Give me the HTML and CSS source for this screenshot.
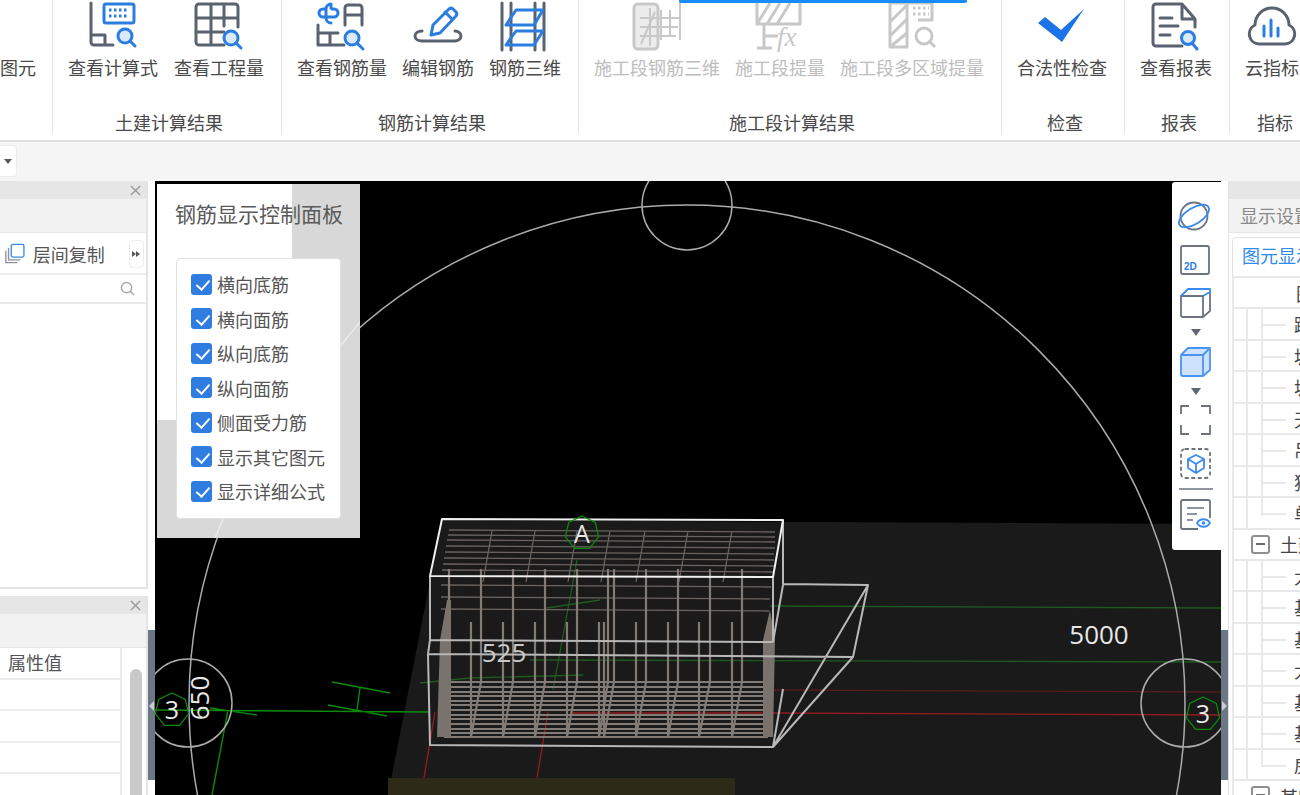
FILE: index.html
```html
<!DOCTYPE html>
<html lang="zh-CN">
<head>
<meta charset="utf-8">
<title>钢筋显示控制面板</title>
<link rel="stylesheet" href="styles.css">
</head>
<body>
<div class="app">
  <div class="top-progress"></div>
  <header class="ribbon">
    <section class="group group-first">
      <div class="tools"><div class="tool tool-end"><span class="tool-label">图元</span></div></div>
    </section>
    <section class="group">
      <div class="tools tools-wide">
        <div class="tool">
          <svg class="ico" viewBox="88 0 50 52"><path class="g" d="M91 3v39a3 3 0 0 0 3 3h19M91 35h14v10"/><rect class="b" x="104" y="4" width="30" height="19" rx="2"/><path class="dots" d="M109 10h20M109 16h20"/><circle class="m" cx="125" cy="36" r="7"/><path class="b" d="M130 41l5 5"/></svg>
          <span class="tool-label">查看计算式</span>
        </div>
        <div class="tool">
          <svg class="ico" viewBox="194 0 50 52"><path class="g" d="M224 45h-25a3 3 0 0 1-3-3V7a3 3 0 0 1 3-3h36a3 3 0 0 1 3 3v20M196 18h42M196 32h28M211 4v41M224 4v22"/><circle class="m" cx="231" cy="38" r="7"/><path class="b" d="M236 43l5 5"/></svg>
          <span class="tool-label">查看工程量</span>
        </div>
      </div>
      <h2 class="group-title">土建计算结果</h2>
    </section>
    <section class="group">
      <div class="tools">
        <div class="tool">
          <svg class="ico" viewBox="317 0 50 52"><path class="b" d="M331 4a5 5 0 0 0-5 5v9a5 5 0 0 0 5 5M326 9h-3a4 4 0 0 0 0 8h11a4 4 0 0 0 0-8h-2M331 4v4"/><path class="g" d="M345 25V8a3 3 0 0 1 3-3h11a3 3 0 0 1 3 3v17M345 15h17M318 25v20h26M318 33h20M330 33v12"/><circle class="m" cx="352" cy="38" r="7"/><path class="b" d="M357 43l6 6"/></svg>
          <span class="tool-label">查看钢筋量</span>
        </div>
        <div class="tool">
          <svg class="ico" viewBox="413 0 50 52"><path class="g" d="M422 31c-4 0-7 2-7 5s3 5 7 5h33c3 0 6-2 6-5s-3-5-6-5"/><path class="b" d="M431 35l2-10 16-16a3 3 0 0 1 4 0l3 3a3 3 0 0 1 0 4L440 33zM445 12l7 7"/></svg>
          <span class="tool-label">编辑钢筋</span>
        </div>
        <div class="tool">
          <svg class="ico" viewBox="500 0 50 52"><path class="g" d="M502 3v47M511 3v47M535 3v47M544 3v47"/><path class="b" d="M516 10h27l-9 15h-28zM516 31h27l-9 14h-28z"/></svg>
          <span class="tool-label">钢筋三维</span>
        </div>
      </div>
      <h2 class="group-title">钢筋计算结果</h2>
    </section>
    <section class="group">
      <div class="tools">
        <div class="tool tool-off">
          <svg class="ico" viewBox="632 0 50 52"><rect class="d d-soft" x="634" y="4" width="24" height="45" rx="4"/><path class="d-thin" d="M640 18h40M640 27h38M640 36h36M650 8v38M661 10v30M670 10v26M680 2v38M641 44l14-32"/></svg>
          <span class="tool-label">施工段钢筋三维</span>
        </div>
        <div class="tool tool-off">
          <svg class="ico" viewBox="755 0 50 52"><path class="d" d="M757 3v21h43V3M757 24l13-21M767 24l13-21M777 24l13-21M764 24v24M757 48h15M764 36h14"/><text class="fx" x="777" y="46">fx</text></svg>
          <span class="tool-label">施工段提量</span>
        </div>
        <div class="tool tool-off">
          <svg class="ico" viewBox="887 0 50 52"><path class="d" d="M890 3h17v44h-17zM890 22l17-17M890 36l17-17M890 47l17-14M907 3h25v17h-14"/><path class="d-dots" d="M913 8h16M913 14h16"/><circle class="d" cx="924" cy="36" r="8"/><path class="d" d="M930 42l5 5"/></svg>
          <span class="tool-label">施工段多区域提量</span>
        </div>
      </div>
      <h2 class="group-title">施工段计算结果</h2>
    </section>
    <section class="group">
      <div class="tools">
        <div class="tool">
          <svg class="ico" viewBox="1037 0 50 52"><polygon class="check" points="1038,23 1045,17 1061,30 1084,9 1062,42"/></svg>
          <span class="tool-label">合法性检查</span>
        </div>
      </div>
      <h2 class="group-title">检查</h2>
    </section>
    <section class="group">
      <div class="tools">
        <div class="tool">
          <svg class="ico" viewBox="1151 0 50 52"><path class="g" d="M1182 46h-26a3 3 0 0 1-3-3V7a3 3 0 0 1 3-3h26l13 15v8M1182 4v15h13M1160 18h12M1160 26h18M1160 35h10"/><circle class="m" cx="1188" cy="38" r="6.5"/><path class="b" d="M1192 43l5 6"/></svg>
          <span class="tool-label">查看报表</span>
        </div>
      </div>
      <h2 class="group-title">报表</h2>
    </section>
    <section class="group group-last">
      <div class="tools">
        <div class="tool">
          <svg class="ico" viewBox="1247 0 50 52"><path class="g" d="M1259 44a10 10 0 0 1-4-19a17 17 0 0 1 34 0a10 10 0 0 1-4 19z"/><path class="b" d="M1264 26v10M1271 20v16M1278 28v8"/></svg>
          <span class="tool-label">云指标</span>
        </div>
      </div>
      <h2 class="group-title">指标</h2>
    </section>
  </header>

  <div class="strip">
    <button class="strip-btn" type="button"><span class="caret"></span></button>
  </div>

  <main class="main">
    <aside class="left">
      <section class="side-panel side-panel-top">
        <div class="side-head"><svg class="close" viewBox="0 0 12 12"><path d="M1 1l10 10M11 1L1 11"/></svg></div>
        <div class="side-sub"></div>
        <div class="copy-bar">
          <svg class="copy-ico" viewBox="0 0 24 24"><path class="copy-g" d="M2 9v13h13M5 6v13h13"/><rect class="copy-b" x="8" y="2" width="14" height="14" rx="2"/></svg>
          <span class="copy-text">层间复制</span>
          <span class="more"><i></i><i></i></span>
        </div>
        <div class="search">
          <svg class="search-ico" viewBox="0 0 16 16"><circle cx="7" cy="7" r="5.5"/><path d="M11 11l4 4"/></svg>
        </div>
        <div class="list"></div>
      </section>
      <section class="side-panel side-panel-bottom">
        <div class="side-head"><svg class="close" viewBox="0 0 12 12"><path d="M1 1l10 10M11 1L1 11"/></svg></div>
        <div class="side-sub"></div>
        <div class="props">
          <div class="props-table">
            <div class="props-row props-header">属性值</div>
            <div class="props-row"></div>
            <div class="props-row"></div>
            <div class="props-row"></div>
            <div class="props-row"></div>
          </div>
          <div class="props-scroll"><span class="thumb"></span></div>
        </div>
      </section>
    </aside>

    <div class="gutter"><span class="grip grip-left"></span></div>

    <div class="viewport">
      <svg class="scene" viewBox="155 181 1066 614" preserveAspectRatio="none">
        <polygon class="floor" points="442,520 1221,524 1221,795 388,795"/>
        <rect class="floor-patch" x="388" y="778" width="347" height="17"/>

        <g class="grid-g">
          <path d="M155 710L430 712M210 708L257 715M332 682L390 693M328 705L387 716M360 688L357 710M228 710L212 795"/>
        </g>
        <g class="grid-g-dim">
          <path d="M547 608L600 600M530 660L1221 662M770 606L1221 608M420 683L470 678L583 675M577 560L553 690"/>
        </g>
        <g class="grid-r">
          <path d="M773 713L1221 715M570 713L773 713M548 712L537 778M435 712L424 778"/>
        </g>
        <path class="grid-r-dim" d="M773 690L1221 692"/>

        <g class="ring">
          <circle cx="687" cy="703" r="498"/>
          <circle cx="687" cy="205" r="45"/>
          <circle cx="188" cy="703" r="44"/>
          <circle cx="1185" cy="703" r="44"/>
        </g>

        <path class="rebar" d="M449 530L775 532M448 535L775 537M447 540L775 542M446 546L775 548M445 552L774 554M444 558L774 560M443 564L774 566M442 570L773 572M441 585L771 587M441 597L770 599M441 609L769 611M492 531L483 582M535 531L526 582M577 531L568 582M610 531L601 582M645 531L636 582M688 531L679 582M732 531L723 582"/>
        <path class="rebar-v" d="M449 569V682L444 737M481 569V682L471 737M513 569V682L503 737M545 569V682L535 737M577 569V682L567 737M608 569V682L599 737M614 569V682L604 737M646 569V682L636 737M678 569V682L668 737M710 569V682L699 737M742 569V682L732 737M471 622V737M503 622V737M535 622V737M567 622V737M599 622V737M604 622V737M636 622V737M668 622V737M699 622V737M732 622V737"/>
        <path class="rebar-mat" d="M448 682H765M447 687H765M447 692H765M446 696H766M446 701H766M446 705H766M445 710H766M445 715H767M445 719H767M444 724H767M444 729H767M444 733H768M444 737H768"/>
        <polygon class="rebar-wall" points="447,600 451,600 451,737 437,737 440,640"/>
        <polygon class="rebar-wall" points="770,610 775,640 773,737 763,737 763,640"/>

        <path class="box" d="M430 640V576M773 577V642L783 585M430 640L772 642M428 654L853 657L868 585L783 584V520M428 654L430 640M428 654L430 745L773 747L853 657M773 747L868 585M773 747L783 689"/>
        <path class="box-top" d="M442 519L783 520L773 577L430 576Z"/>

        <g class="axis-hex">
          <polygon points="172,693 185.300,699.400 188.600,713.800 179.400,725.300 164.600,725.300 155.400,713.800 158.700,699.400"/>
          <polygon points="582,516 595.300,522.400 598.600,536.800 589.400,548.300 574.600,548.300 565.400,536.800 568.700,522.400"/>
          <polygon points="1203,697 1216.300,703.400 1219.600,717.800 1210.400,729.300 1195.600,729.300 1186.400,717.800 1189.700,703.400"/>
        </g>
        <text class="num num-axis" x="172" y="719">3</text>
        <text class="num num-axis" x="582" y="543">A</text>
        <text class="num num-axis" x="1203" y="723">3</text>
        <text class="num" transform="translate(209 698) rotate(-90)">650</text>
        <text class="num num-dim" x="504" y="662">525</text>
        <text class="num" x="1099" y="644">5000</text>
      </svg>

      <div class="control-panel">
        <svg class="panel-trace" viewBox="0 0 203 354"><path d="M184 161L203 138M66 335L58 354"/></svg>
        <h1 class="control-title">钢筋显示控制面板</h1>
        <div class="control-card">
          <label class="option"><input type="checkbox" checked><span>横向底筋</span></label>
          <label class="option"><input type="checkbox" checked><span>横向面筋</span></label>
          <label class="option"><input type="checkbox" checked><span>纵向底筋</span></label>
          <label class="option"><input type="checkbox" checked><span>纵向面筋</span></label>
          <label class="option"><input type="checkbox" checked><span>侧面受力筋</span></label>
          <label class="option"><input type="checkbox" checked><span>显示其它图元</span></label>
          <label class="option"><input type="checkbox" checked><span>显示详细公式</span></label>
        </div>
      </div>

      <div class="view-tools">
        <svg class="view-tools-svg" viewBox="1172 182 49 368">
          <circle class="vg" cx="1194" cy="216" r="13.5"/>
          <ellipse class="vb" cx="1194" cy="216" rx="17" ry="8" transform="rotate(-32 1194 216)"/>
          <rect class="vg" x="1181" y="246" width="28" height="28" rx="2"/>
          <text class="label-2d" x="1184" y="270">2D</text>
          <path class="vg" d="M1181 296h22v21h-20a2 2 0 0 1-2-2zM1203 296v21l7-6V291"/>
          <path class="vb" d="M1181 296l7-7h22v3l-7 4"/>
          <polygon class="tri" points="1191,329 1201,329 1196,336"/>
          <path class="vb-fill" d="M1181 355l7-7h22v22l-7 6h-20a2 2 0 0 1-2-2zM1181 355h22v21M1203 355l7-7"/>
          <polygon class="tri" points="1191,388 1201,388 1196,395"/>
          <path class="vg" d="M1181 414v-8h8M1201 406h9v8M1210 425v9h-9M1189 434h-8v-9"/>
          <rect class="vdash" x="1181" y="449" width="29" height="29" rx="4"/>
          <path class="vb" d="M1196 455l8 4v9l-8 5-8-5v-9zM1188 459l8 5 8-5M1196 464v9"/>
          <path class="vthin" d="M1179 489h34"/>
          <path class="vg" d="M1198 529h-15a2 2 0 0 1-2-2v-25a2 2 0 0 1 2-2h25a2 2 0 0 1 2 2v16"/>
          <path class="vthin" d="M1187 508h17M1187 514h10M1187 520h6"/>
          <path class="vb" d="M1197 523c3-5 10-5 13 0c-3 5-10 5-13 0z"/>
          <circle class="vb-dot" cx="1203.500" cy="523" r="1.800"/>
        </svg>
      </div>
    </div>

    <div class="gutter gutter-right"><span class="grip grip-right"></span></div>

    <aside class="right">
      <div class="side-head"></div>
      <div class="side-sub right-title">显示设置</div>
      <div class="tabs"><div class="tab">图元显示</div></div>
      <div class="tree">
        <div class="tree-row tree-root"><span class="tree-text">图元</span></div>
        <div class="tree-row"><i class="g1"></i><i class="g2"></i><span class="tree-text">踏步</span></div>
        <div class="tree-row"><i class="g1"></i><i class="g2"></i><span class="tree-text">坡道</span></div>
        <div class="tree-row"><i class="g1"></i><i class="g2"></i><span class="tree-text">坡道</span></div>
        <div class="tree-row"><i class="g1"></i><i class="g2"></i><span class="tree-text">天棚</span></div>
        <div class="tree-row"><i class="g1"></i><i class="g2"></i><span class="tree-text">吊顶</span></div>
        <div class="tree-row"><i class="g1"></i><i class="g2"></i><span class="tree-text">独立</span></div>
        <div class="tree-row tree-last"><i class="g1"></i><i class="g2"></i><span class="tree-text">单梁</span></div>
        <div class="tree-row tree-section"><span class="toggle"></span><span class="section-text">土建</span></div>
        <div class="tree-row"><i class="g1"></i><i class="g2"></i><span class="tree-text">大开挖</span></div>
        <div class="tree-row"><i class="g1"></i><i class="g2"></i><span class="tree-text">基坑</span></div>
        <div class="tree-row"><i class="g1"></i><i class="g2"></i><span class="tree-text">基槽</span></div>
        <div class="tree-row"><i class="g1"></i><i class="g2"></i><span class="tree-text">大开挖</span></div>
        <div class="tree-row"><i class="g1"></i><i class="g2"></i><span class="tree-text">基础</span></div>
        <div class="tree-row"><i class="g1"></i><i class="g2"></i><span class="tree-text">基础梁</span></div>
        <div class="tree-row tree-last"><i class="g1"></i><i class="g2"></i><span class="tree-text">房心</span></div>
        <div class="tree-row tree-section"><span class="toggle"></span><span class="section-text">其它</span></div>
      </div>
    </aside>
  </main>
</div>
</body>
</html>
```

FILE: styles.css
```css
* { box-sizing: border-box; }

html, body {
  margin: 0;
  height: 100%;
  overflow: hidden;
  background: #fff;
}

body {
  font-family: "Noto Sans CJK SC", "Liberation Sans", sans-serif;
  font-size: 18px;
  color: #4a4a4a;
}

.app {
  position: relative;
  width: 1300px;
  height: 795px;
  display: flex;
  flex-direction: column;
  overflow: hidden;
}

.top-progress {
  position: absolute;
  left: 679px;
  top: 0;
  width: 288px;
  height: 3px;
  background: #1a8cf5;
  border-radius: 0 0 2px 2px;
}

/* ribbon */
.ribbon {
  flex: none;
  height: 142px;
  display: flex;
  align-items: flex-start;
  background: #fff;
  border-bottom: 2px solid #dedede;
}

.group {
  height: 134px;
  flex: none;
  display: flex;
  flex-direction: column;
  justify-content: space-between;
  padding: 0 17px 0 15px;
  border-right: 1px solid #e4e4e4;
}

.group-first { width: 53px; padding: 0; }
.group-last { border-right: 0; padding-right: 0; }

.tools { display: flex; gap: 15px; }
.tools-wide { gap: 16px; }

.tool {
  display: flex;
  flex-direction: column;
  align-items: center;
}

.group-first .tools { justify-content: flex-end; padding: 55px 16px 0 0; }
.tool-off { color: #bdbdbd; }

.ico {
  display: block;
  width: 50px;
  height: 52px;
  overflow: visible;
  margin-bottom: 3px;
}

.tool-label {
  display: block;
  line-height: 24px;
  white-space: nowrap;
}

.group-title {
  margin: 0 0 1px;
  padding-left: 6px;
  font-size: 18px;
  font-weight: 400;
  line-height: 22px;
  text-align: center;
  white-space: nowrap;
}

.ico .g { fill: none; stroke: #5a6270; stroke-width: 3; stroke-linecap: round; stroke-linejoin: round; }
.ico .b { fill: none; stroke: #2a7de1; stroke-width: 3; stroke-linecap: round; stroke-linejoin: round; }
.ico .m { fill: #dbe9fd; stroke: #2a7de1; stroke-width: 3; }
.ico .dots { fill: none; stroke: #2a7de1; stroke-width: 3; stroke-dasharray: 2.500 2.500; }
.ico .d { fill: none; stroke: #c8c8c8; stroke-width: 3; stroke-linejoin: round; }
.ico .d-soft { fill: #ececec; }
.ico .d-thin { fill: none; stroke: #c8c8c8; stroke-width: 2; }
.ico .d-dots { fill: none; stroke: #c8c8c8; stroke-width: 3; stroke-dasharray: 2.500 2.500; }
.ico .fx { fill: #c8c8c8; font-family: "Liberation Serif", serif; font-style: italic; font-size: 27px; }
.ico .check { fill: #1a73e8; }

/* strip */
.strip {
  flex: none;
  height: 39px;
  background: #f5f5f5;
  padding-top: 3px;
}

.strip-btn {
  display: flex;
  align-items: center;
  justify-content: center;
  width: 17px;
  height: 32px;
  padding: 0;
  background: #fff;
  border: 1px solid #ececec;
  border-left: 0;
  border-radius: 0 4px 4px 0;
}

.caret {
  width: 0;
  height: 0;
  border-left: 4px solid transparent;
  border-right: 4px solid transparent;
  border-top: 5px solid #5a5a5a;
}

/* main */
.main {
  flex: 1;
  min-height: 0;
  display: flex;
}

.left {
  flex: none;
  width: 148px;
  display: flex;
  flex-direction: column;
  gap: 7px;
  background: #fff;
}

.side-panel {
  display: flex;
  flex-direction: column;
  border-right: 2px solid #e4e4e4;
  min-height: 0;
}

.side-panel-top { height: 408px; border-bottom: 2px solid #e4e4e4; }
.side-panel-bottom { flex: 1; }

.side-head {
  flex: none;
  height: 18px;
  display: flex;
  align-items: center;
  justify-content: flex-end;
  padding-right: 5px;
  background: #e6e6e6;
}

.close { width: 11px; height: 11px; }
.close path { fill: none; stroke: #9a9a9a; stroke-width: 1.500; }

.side-sub {
  flex: none;
  height: 34px;
  background: #f2f2f2;
  border-bottom: 1px solid #e6e6e6;
}

.copy-bar {
  flex: none;
  height: 42px;
  display: flex;
  align-items: center;
  padding: 1px 2px 0 4px;
  border-bottom: 2px solid #ececec;
}

.copy-ico { width: 23px; height: 23px; margin-right: 7px; }
.copy-g { fill: none; stroke: #8c939c; stroke-width: 1.500; }
.copy-b { fill: #fff; stroke: #3a8bf0; stroke-width: 1.500; }
.copy-text { white-space: nowrap; color: #555; margin-right: 2px; }

.more {
  margin-left: 22px;
  width: 16px;
  height: 28px;
  display: flex;
  align-items: center;
  justify-content: center;
  border: 1px solid #ececec;
  border-radius: 4px;
}

.more i {
  width: 0;
  height: 0;
  border-top: 3px solid transparent;
  border-bottom: 3px solid transparent;
  border-left: 4px solid #555;
}

.search {
  flex: none;
  height: 29px;
  display: flex;
  align-items: center;
  justify-content: flex-end;
  padding-right: 11px;
  border-bottom: 2px solid #e8e8e8;
}

.search-ico { width: 15px; height: 15px; }
.search-ico circle, .search-ico path { fill: none; stroke: #aaa; stroke-width: 1.600; }

.list { flex: 1; }

.props {
  flex: 1;
  display: flex;
  min-height: 0;
}

.props-table {
  width: 122px;
  flex: none;
  border-right: 2px solid #ececec;
}

.props-row {
  height: 31.500px;
  border-bottom: 2px solid #ececec;
}

.props-header {
  padding-left: 8px;
  line-height: 28px;
  color: #555;
}

.props-scroll {
  flex: 1;
  padding: 21px 5px 0 8px;
}

.thumb {
  display: block;
  width: 12px;
  height: 160px;
  background: #c9c9c9;
  border-radius: 6px;
}

/* gutters */
.gutter {
  flex: none;
  width: 7px;
  position: relative;
  background: #fff;
}

.gutter::before {
  content: "";
  position: absolute;
  left: 0;
  top: 449px;
  width: 7px;
  height: 150px;
  background: #6b7785;
}

.gutter-right { width: 7px; }

.grip {
  position: absolute;
  top: 520px;
  width: 0;
  height: 0;
  border-top: 5px solid transparent;
  border-bottom: 5px solid transparent;
}

.grip-left { left: 1px; border-right: 5px solid #c9ced4; }
.grip-right { left: 1px; border-left: 5px solid #c9ced4; }

/* viewport */
.viewport {
  position: relative;
  flex: none;
  width: 1066px;
  background: #000;
  overflow: hidden;
}

.scene {
  position: absolute;
  inset: 0;
  width: 100%;
  height: 100%;
  display: block;
}

.floor { fill: #1a1a1a; }
.floor-patch { fill: #2e2a18; }

.grid-g path { fill: none; stroke: #0b8a0b; stroke-width: 1.400; }
.grid-g-dim path { fill: none; stroke: #1f5a1f; stroke-width: 1.300; }
.grid-r path { fill: none; stroke: #8f1c1c; stroke-width: 1.400; }
.grid-r-dim { fill: none; stroke: #541c1c; stroke-width: 1.400; }

.ring circle { fill: none; stroke: #ababab; stroke-width: 1.500; }

.rebar { fill: none; stroke: #6a6360; stroke-width: 1.300; }
.rebar-v { fill: none; stroke: #827a75; stroke-width: 2.200; }
.rebar-mat { fill: none; stroke: #837b76; stroke-width: 2; }
.rebar-wall { fill: #7a726d; }

.box { fill: none; stroke: #b8b8b8; stroke-width: 2; stroke-linejoin: round; }
.box-top { fill: none; stroke: #efefef; stroke-width: 2; stroke-linejoin: round; }

.axis-hex polygon { fill: none; stroke: #0b8a0b; stroke-width: 1.300; }

.num {
  fill: #e8e8e8;
  font-family: "Open Sans", "Liberation Sans", sans-serif;
  font-size: 26px;
  text-anchor: middle;
}

.num-axis { font-size: 25px; }
.num-dim { fill: #c9c9c9; }

/* control panel */
.control-panel {
  position: absolute;
  left: 2px;
  top: 3px;
  width: 203px;
  height: 354px;
  padding: 15px 0 0 19px;
  background: linear-gradient(#fff, #fff) 0 0 / 135px 236px no-repeat, #d8d8d8;
}

.panel-trace {
  position: absolute;
  inset: 0;
  width: 100%;
  height: 100%;
}

.panel-trace path { fill: none; stroke: #ececec; stroke-width: 1.300; }

.control-title {
  position: relative;
  margin: 0 0 31px -1px;
  font-size: 21px;
  font-weight: 400;
  line-height: 28px;
  white-space: nowrap;
  color: #5a5a5a;
}

.control-card {
  position: relative;
  width: 165px;
  height: 261px;
  padding: 8px 0 0 14px;
  background: #fff;
  border: 1px solid #e2e2e2;
  border-radius: 4px;
}

.option {
  display: flex;
  align-items: center;
  gap: 5px;
  height: 34.500px;
  white-space: nowrap;
  color: #555;
}

.option input {
  appearance: none;
  position: relative;
  flex: none;
  width: 21px;
  height: 21px;
  margin: 0;
  background: #2f7de1;
  border-radius: 3px;
}

.option input::after {
  content: "";
  position: absolute;
  left: 7.500px;
  top: 3.500px;
  width: 6px;
  height: 11px;
  border: solid #fff;
  border-width: 0 2.500px 2.500px 0;
  transform: rotate(42deg);
}

/* view tools */
.view-tools {
  position: absolute;
  right: 0;
  top: 1px;
  width: 49px;
  height: 368px;
  background: #fff;
  border-radius: 3px 0 0 3px;
}

.view-tools-svg { display: block; width: 49px; height: 368px; }

.vg { fill: none; stroke: #6b7280; stroke-width: 1.800; stroke-linejoin: round; }
.vb { fill: none; stroke: #3a8bf0; stroke-width: 1.800; stroke-linejoin: round; }
.vb-fill { fill: #cfe2fd; stroke: #4a93f2; stroke-width: 1.800; stroke-linejoin: round; }
.vb-dot { fill: #3a8bf0; }
.vdash { fill: none; stroke: #6b7280; stroke-width: 1.800; stroke-dasharray: 4 2.500; }
.vthin { fill: none; stroke: #6b7280; stroke-width: 1.300; }
.tri { fill: #5f6672; }
.label-2d { fill: #2a7de1; font-family: "Liberation Sans", sans-serif; font-weight: 700; font-size: 10px; }

/* right panel */
.right {
  flex: 1;
  min-width: 0;
  display: flex;
  flex-direction: column;
  overflow: hidden;
  border-left: 1px solid #e2e2e2;
}

.right-title {
  padding-left: 11px;
  line-height: 33px;
  color: #8a8a8a;
  white-space: nowrap;
}

.tabs {
  flex: none;
  height: 43px;
  padding: 4px 0 0 3px;
}

.tab {
  height: 39px;
  padding: 4px 0 0 9px;
  white-space: nowrap;
  color: #2f8af0;
  background: #fff;
  border: 1px solid #e2e2e2;
  border-bottom: 0;
  border-right: 0;
  border-radius: 5px 0 0 0;
  line-height: 26px;
}

.tree {
  margin-left: 3px;
  border-left: 2px solid #e8e8e8;
  border-top: 2px solid #e8e8e8;
}

.tree-row {
  position: relative;
  display: flex;
  align-items: center;
  height: 31.440px;
  border-bottom: 2px solid #e8e8e8;
  white-space: nowrap;
}

.g1, .g2 {
  position: absolute;
  top: -1px;
  bottom: -2px;
  width: 2px;
  background: #e8e8e8;
}

.g1 { left: 12px; }
.g2 { left: 27px; }

.g2::after {
  content: "";
  position: absolute;
  left: 0;
  top: 16px;
  width: 25px;
  height: 2px;
  background: #e8e8e8;
}

.tree-last .g2 { bottom: 12px; }

.tree-text {
  position: absolute;
  left: 60px;
  top: 2px;
  line-height: 26px;
  color: #444;
}

.tree-root .tree-text { left: 62px; }

.toggle {
  position: relative;
  flex: none;
  width: 19px;
  height: 19px;
  margin-left: 17px;
  border: 2px solid #8e8e8e;
  border-radius: 3px;
  background: #fff;
}

.toggle::after {
  content: "";
  position: absolute;
  left: 3px;
  top: 6px;
  width: 9px;
  height: 2px;
  background: #6b6b6b;
}

.section-text {
  margin-left: 10px;
  color: #444;
}
```
